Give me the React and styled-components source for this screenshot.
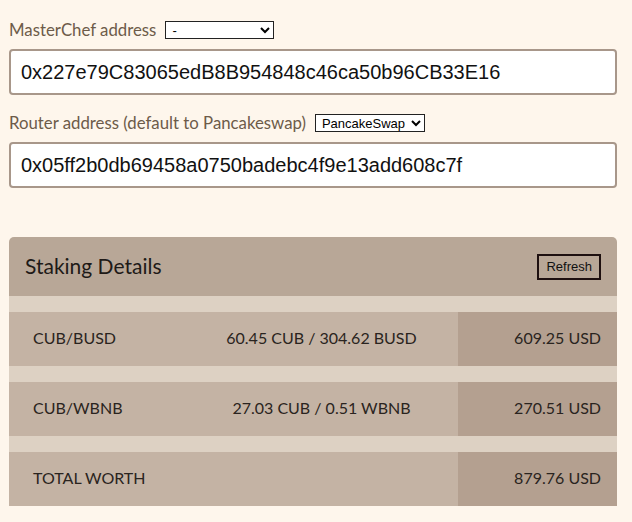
import React, { useState } from 'react'
import styled, { createGlobalStyle } from 'styled-components'

const GlobalStyle = createGlobalStyle`
  html, body {
    margin: 0;
    padding: 0;
    background: #fef6ec;
  }
`

const Page = styled.div`
  width: 608px;
  padding: 21px 0 16px 9px;
  font-family: Lato, 'Noto Sans', sans-serif;
`

const Field = styled.div`
  display: flex;
  flex-direction: column;
  gap: 10px;
  margin-bottom: ${(p) => p.gap || 0}px;
`

const LabelRow = styled.div`
  display: flex;
  align-items: center;
  gap: 9px;
  height: 18px;
`

const Label = styled.label`
  font-size: 16.8px;
  color: #6d5b49;
  margin-top: -1px;
`

const Picker = styled.select`
  width: ${(p) => p.w}px;
  height: 18px;
  padding: 0 0 0 2px;
  font-family: 'Liberation Sans', Arial, sans-serif;
  font-size: 13px;
  color: #000;
  background: #fff;
  border: 1px solid #222;
  border-radius: 0;
`

const AddressInput = styled.input`
  box-sizing: border-box;
  width: 100%;
  height: 46px;
  padding: 0 10px;
  font-family: 'Liberation Sans', Arial, sans-serif;
  font-size: 20px;
  color: #111;
  background: #fff;
  border: 2px solid #a8978a;
  border-radius: 4px;
  outline: none;
`

const Card = styled.div`
  margin-top: 49px;
`

const CardHeader = styled.div`
  display: flex;
  align-items: center;
  justify-content: space-between;
  height: 59px;
  padding: 0 16px 0 16px;
  background: #b8a797;
  border-radius: 5px 5px 0 0;
`

const CardTitle = styled.h3`
  margin: 0 0 3px;
  font-size: 21px;
  font-weight: 400;
  color: #1e1a17;
`

const RefreshButton = styled.button`
  height: 26px;
  padding: 0 7px;
  font-family: 'Liberation Sans', Arial, sans-serif;
  font-size: 13px;
  color: #111;
  background: transparent;
  border: 2px solid #1e1010;
  cursor: pointer;
`

const Spacer = styled.div`
  height: 16px;
  background: #ddd1c3;
`

const Row = styled.div`
  display: grid;
  grid-template-columns: 176px 1fr 159px;
  height: 54px;
  background: #c4b3a4;
  font-size: 16px;
  color: #2a2420;
`

const Cell = styled.div`
  display: flex;
  align-items: center;
  justify-content: ${(p) => p.align || 'flex-start'};
  padding: ${(p) => (p.align === 'flex-end' ? '0 16px 3px 0' : p.align === 'center' ? '0 0 3px' : '0 0 3px 24px')};
  background: ${(p) => (p.total ? '#b4a090' : 'transparent')};
  white-space: nowrap;
`

const pools = [
  { pair: 'CUB/BUSD', amounts: '60.45 CUB / 304.62 BUSD', usd: '609.25 USD' },
  { pair: 'CUB/WBNB', amounts: '27.03 CUB / 0.51 WBNB', usd: '270.51 USD' },
]

const App = () => {
  const [masterChef, setMasterChef] = useState('0x227e79C83065edB8B954848c46ca50b96CB33E16')
  const [router, setRouter] = useState('0x05ff2b0db69458a0750badebc4f9e13add608c7f')

  return (
    <Page>
      <GlobalStyle />
      <Field gap={19}>
        <LabelRow>
          <Label>MasterChef address</Label>
          <Picker w={109} defaultValue="-">
            <option value="-">-</option>
          </Picker>
        </LabelRow>
        <AddressInput value={masterChef} onChange={(e) => setMasterChef(e.target.value)} />
      </Field>

      <Field>
        <LabelRow>
          <Label>Router address (default to Pancakeswap)</Label>
          <Picker w={110} defaultValue="pcs">
            <option value="pcs">PancakeSwap</option>
          </Picker>
        </LabelRow>
        <AddressInput value={router} onChange={(e) => setRouter(e.target.value)} />
      </Field>

      <Card>
        <CardHeader>
          <CardTitle>Staking Details</CardTitle>
          <RefreshButton>Refresh</RefreshButton>
        </CardHeader>
        {pools.map((p) => (
          <React.Fragment key={p.pair}>
            <Spacer />
            <Row>
              <Cell>{p.pair}</Cell>
              <Cell align="center">{p.amounts}</Cell>
              <Cell align="flex-end" total>
                {p.usd}
              </Cell>
            </Row>
          </React.Fragment>
        ))}
        <Spacer />
        <Row>
          <Cell>TOTAL WORTH</Cell>
          <Cell align="center" />
          <Cell align="flex-end" total>
            879.76 USD
          </Cell>
        </Row>
      </Card>
    </Page>
  )
}

export default App
